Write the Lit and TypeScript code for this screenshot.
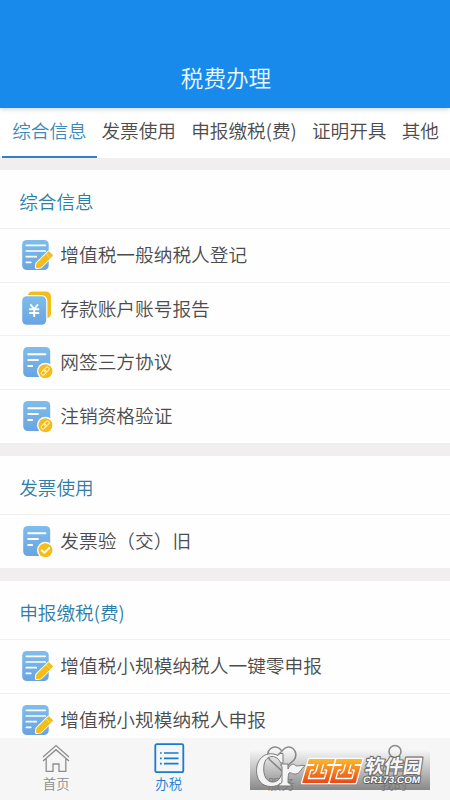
import { LitElement, html, svg, css } from "lit";
import { customElement } from "lit/decorators.js";
import { classMap } from "lit/directives/class-map.js";

type IconKind = "edit" | "money" | "link" | "check";

interface Section {
  title: string;
  rows: { icon: IconKind; label: string }[];
}

const TABS = ["综合信息", "发票使用", "申报缴税(费)", "证明开具", "其他"];

const SECTIONS: Section[] = [
  {
    title: "综合信息",
    rows: [
      { icon: "edit", label: "增值税一般纳税人登记" },
      { icon: "money", label: "存款账户账号报告" },
      { icon: "link", label: "网签三方协议" },
      { icon: "link", label: "注销资格验证" },
    ],
  },
  { title: "发票使用", rows: [{ icon: "check", label: "发票验（交）旧" }] },
  {
    title: "申报缴税(费)",
    rows: [
      { icon: "edit", label: "增值税小规模纳税人一键零申报" },
      { icon: "edit", label: "增值税小规模纳税人申报" },
    ],
  },
];

@customElement("row-icon")
class RowIcon extends LitElement {
  static properties = { kind: { type: String } };
  declare kind: IconKind;

  static styles = css`
    :host { display: block; width: 34px; height: 35px; }
    svg { display: block; }
  `;

  private art() {
    if (this.kind === "edit") {
      return svg`
        <rect x="2.2" y="2" width="26.5" height="30" rx="4.5" fill="url(#g)"/>
        <path d="M6.3 7.3H25.3M6.3 13H25.3M6.3 18.7H16.3M6.3 24.3H10.8" stroke="#fff" stroke-width="1.7" stroke-linecap="round"/>
        <path d="M28.8 14.2L32 17.4L20.6 28.8L16.6 29.3L17 25.7Z" stroke="#fff" stroke-width="3.4" stroke-linejoin="round" fill="#fff"/>
        <path d="M28.8 14L32.3 17.5L20.6 29L16.6 29.3L17 25.7Z" fill="#f4bd19" stroke="#f4bd19" stroke-width="1.3" stroke-linejoin="round"/>
        <path d="M26.1 15.7L30 19.6" stroke="#fff" stroke-width=".8" opacity=".6"/>`;
    }
    if (this.kind === "money") {
      return svg`
        <rect x="7.5" y=".5" width="23.5" height="27" rx="5" fill="#f4bd19"/>
        <rect x="1" y="4" width="26.4" height="30.5" rx="6" fill="#fff"/>
        <rect x="2.2" y="5.3" width="24" height="28.4" rx="4.5" fill="url(#g)"/>
        <path d="M10.4 13.3L14.2 18L18 13.3M9.2 18.2H19.2M9.2 22H19.2M14.2 18V26" stroke="#fff" stroke-width="1.9" fill="none"/>`;
    }
    return svg`
      <rect x="3.2" y="2" width="27" height="30" rx="4.5" fill="url(#g)"/>
      <path d="M8.2 9.2H25.4M8.2 15H18M8.2 21H12.2" stroke="#fff" stroke-width="1.9" stroke-linecap="round"/>
      <circle cx="25.4" cy="26.2" r="8.4" fill="#fff"/>
      <circle cx="25.4" cy="26.2" r="7" fill="#f4bd19"/>
      ${this.kind === "check"
        ? svg`<path d="M21.7 26.2L24.4 28.8L29.2 24" stroke="#fff" stroke-width="1.9" fill="none" stroke-linecap="round" stroke-linejoin="round"/>`
        : svg`<g transform="rotate(-45 25.2 26)" fill="none" stroke="#fdf0c4" stroke-width="1"><rect x="20.4" y="24.2" width="5.4" height="3.6" rx="1.5"/><rect x="24.6" y="24.2" width="5.4" height="3.6" rx="1.5"/></g>`}`;
  }

  render() {
    return html`<svg width="34" height="35" viewBox="0 0 34 35">
      <defs><linearGradient id="g" x1="0" y1="0" x2="0" y2="1">
        <stop offset="0" stop-color="#7fbdea"/><stop offset="1" stop-color="#69a4e2"/>
      </linearGradient></defs>
      ${this.art()}
    </svg>`;
  }
}

@customElement("site-mark")
class SiteMark extends LitElement {
  static styles = css`
    :host { display: block; width: 180px; height: 40px; }
    svg { display: block; overflow: visible; }
    .cn { font-family: "Noto Sans CJK SC", sans-serif; font-weight: 700; font-size: 19px; }
    .url { font-family: "Liberation Sans", sans-serif; font-weight: 700; font-size: 9.5px; }
  `;

  render() {
    return html`<svg width="180" height="40" viewBox="0 0 180 40">
      <defs>
        <linearGradient id="shade" x1="0" y1="0" x2="0" y2="1">
          <stop offset="0" stop-color="#777" stop-opacity="0"/><stop offset="1" stop-color="#747474" stop-opacity=".85"/>
        </linearGradient>
        <linearGradient id="fire" gradientUnits="userSpaceOnUse" x1="0" y1="0" x2="0" y2="24">
          <stop offset="0" stop-color="#fcb92a"/><stop offset="1" stop-color="#ec4715"/>
        </linearGradient>
      </defs>
      <rect width="180" height="40" fill="url(#shade)"/>
      ${[59, 86.5].map((x) => svg`<g transform="translate(${x} 9) skewX(-16)" stroke-linejoin="round">
        <path d="M0 0H26V5H20V7H26V24H0V7H7V5H0Z" fill="#fff" stroke="#fff" stroke-width="2.5"/>
        <path d="M0 0H26V5H20V7H26V24H0V7H7V5H0Z" fill="url(#fire)"/>
        <path d="M10.500 5.200V12Q10 14 8 15M16 5.200V14H19.500M5 11V19.500H21V11M5 11H8M18.500 11H21" fill="none" stroke="#fff" stroke-width="1.4"/>
      </g>`)}
      <g fill="#f4f4f4" stroke="#7b7b7b" stroke-width="1" stroke-linejoin="round">
        <path d="M30 3.5H33V13H30.5C28 5 16 3 14 15C12.5 26 17 33 24 32C28 31 30 29 31 25H35C34 32 29 36.5 21 36.5C12 36.5 6.5 30 6.5 20.5C6.5 8 17 0 28 5.5Z"/>
        <path d="M31 14H38V19C40 15 43 13 45 15C47 17 49 15 55 15.5C51 19 49 25 44 24C42 24 41 22 39 23C38 26 38 30 38 32C38 33 39 34 41 34V36H29V34C31 34 32 33 32 31V18C32 16 32 16 31 16Z"/>
      </g>
      <g transform="skewX(-9)" stroke-linejoin="round">
        <text class="cn" x="118" y="23" textLength="57" lengthAdjust="spacingAndGlyphs" stroke="#707070" stroke-width="2.2" fill="#f8f8f8" paint-order="stroke">软件园</text>
        <text class="url" x="118" y="33.5" textLength="57" lengthAdjust="spacingAndGlyphs" stroke="#5c5c5c" stroke-width="1.8" fill="#fff" paint-order="stroke">CR173.COM</text>
      </g>
    </svg>`;
  }
}

@customElement("app-root")
class AppRoot extends LitElement {
  static styles = css`
    :host {
      display: flex; flex-direction: column; position: relative;
      height: 800px; overflow: hidden; background: #f0eeef;
      font-family: "Noto Sans CJK SC", sans-serif; font-weight: 350; color: #4c4c4c;
    }
    .header {
      flex: none; height: 108px; box-sizing: border-box; padding: 49px 0 0 2px;
      background: #188aec; color: #eaf8ff; text-align: center;
      font-size: 22.6px; line-height: 57px;
      box-shadow: 0 1px 5px #0003; z-index: 1;
    }
    .tabs {
      flex: none; display: flex; gap: 5px; height: 49.5px; padding-left: 2px;
      background: #fff; font-size: 18.65px; line-height: 44px; white-space: nowrap;
    }
    .tab { box-sizing: border-box; padding: 0 0 0 10.2px; border-bottom: 2.5px solid transparent; }
    .tab.active { padding-right: 10px; margin-right: -10.5px; border-color: #3581bf; color: #3d89b9; }
    .content { flex: 1; min-height: 0; overflow: hidden; padding-top: 12.5px; display: flex; flex-direction: column; gap: 13.5px; }
    .section { flex: none; background: #fefefe; }
    .title { height: 58px; line-height: 61px; padding-left: 19.2px; font-size: 18.65px; color: #2d7fa8; }
    .row {
      display: flex; align-items: flex-start; gap: 6.3px; height: 53.7px; box-sizing: border-box;
      padding-left: 20px; border-top: 1.5px solid #efeff0; font-size: 18.7px;
    }
    .row row-icon { margin-top: 8.8px; }
    .label { line-height: 50px; }
    .nav {
      flex: none; height: 62px; display: grid; grid-template-columns: repeat(4, 1fr);
      background: #f6f6f7; color: #8d8d8d; font-size: 13.4px;
    }
    .item { display: flex; flex-direction: column; align-items: center; padding-top: 5px; }
    .item svg { display: block; fill: none; stroke: currentColor; stroke-width: 1.3; }
    .item.active { color: #197bd1; }
    .caption { line-height: 20px; }
    .mark { position: absolute; left: 250px; top: 750px; z-index: 2; }
  `;

  private navItem(label: string, art: unknown, active = false) {
    return html`<div class=${classMap({ item: true, active })}>
      <svg width="32" height="30" viewBox="0 0 32 30">${art}</svg>
      <span class="caption">${label}</span>
    </div>`;
  }

  render() {
    return html`
      <div class="header">税费办理</div>
      <div class="tabs">
        ${TABS.map((t, i) => html`<div class=${classMap({ tab: true, active: i === 0 })}>${t}</div>`)}
      </div>
      <div class="content">
        ${SECTIONS.map((s) => html`<div class="section">
          <div class="title">${s.title}</div>
          ${s.rows.map((r) => html`<div class="row">
            <row-icon .kind=${r.icon}></row-icon><span class="label">${r.label}</span>
          </div>`)}
        </div>`)}
      </div>
      <div class="nav">
        ${this.navItem("首页", svg`<path d="M3 14L16 2.5L29 14M3 18L16 6.7L29 18M6.2 16V28.3H13V21H19V28.3H25.8V16"/>`)}
        ${this.navItem("办税", svg`<rect x="2.3" y="1.2" width="28" height="28" rx="1.5" stroke-width="1.8"/><path d="M11 10H25.5M11 15.3H25.5M11 20.7H25.5M7 10H8.7M7 15.3H8.7M7 20.7H8.7" stroke-width="1.7"/>`, true)}
        ${this.navItem("服务", svg`<path stroke-width="1.6" d="M17 28L5 17C-2 9 9 -2 17 8C25 -2 35 9 29 17Z M17 8L13 12"/>`)}
        ${this.navItem("我的", svg`<circle stroke-width="1.6" cx="17" cy="8.5" r="6"/><path d="M5 28C6 12.5 28 12.5 29 28Z"/>`)}
      </div>
      <site-mark class="mark"></site-mark>
    `;
  }
}
